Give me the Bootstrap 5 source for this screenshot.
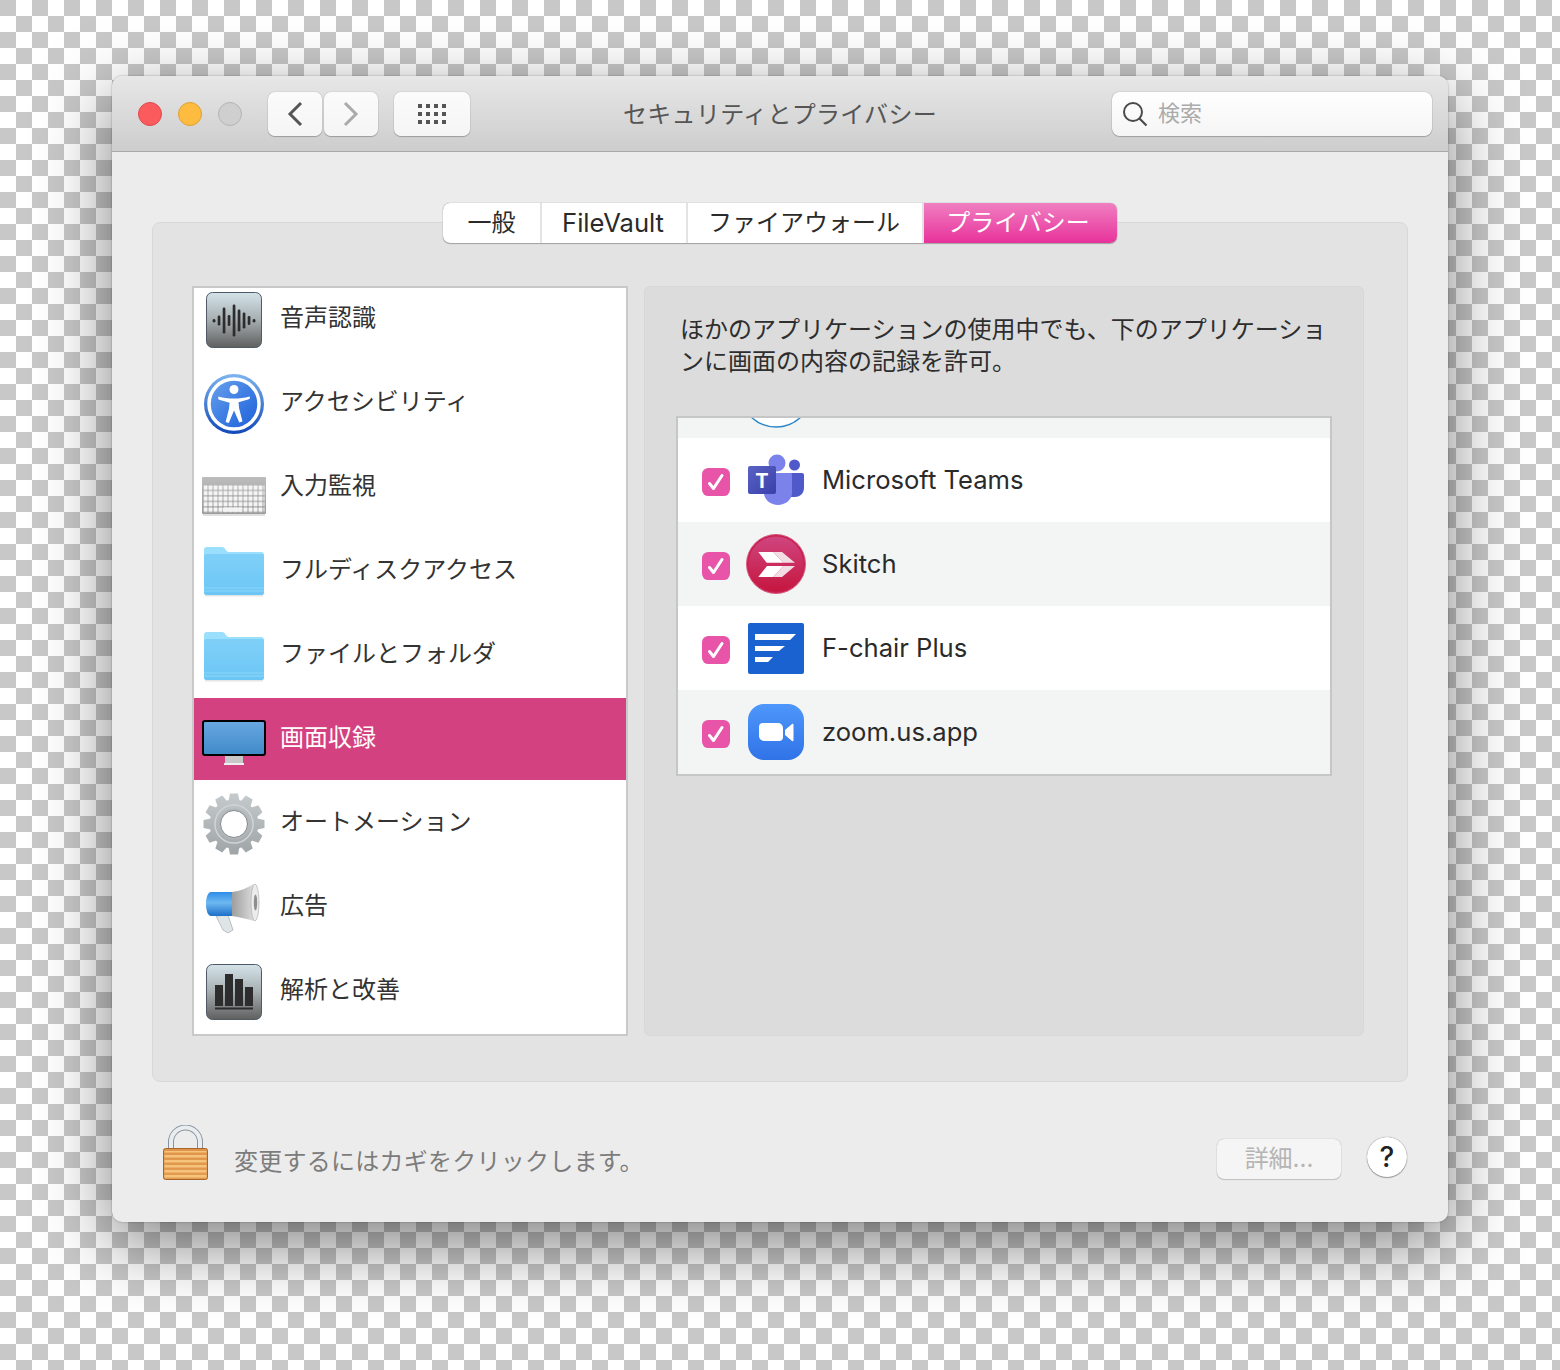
<!DOCTYPE html>
<html lang="ja">
<head>
  <meta charset="UTF-8">
  <title>セキュリティとプライバシー</title>
  <link href="https://cdn.jsdelivr.net/npm/bootstrap@5.3.2/dist/css/bootstrap.min.css" rel="stylesheet">
  <style>
    html, body { height: 100%; }
    body {
      margin: 0;
      overflow: hidden;
      font-family: Inter, "Noto Sans CJK JP", sans-serif;
      background-color: #fff;
      background-image: conic-gradient(#fff 25%, #c8c8c8 0 50%, #fff 0 75%, #c8c8c8 0);
      background-size: 32px 32px;
      padding: 76px 112px 0;
    }
    .mac-window {
      width: 1336px;
      height: 1146px;
      background: #ececec;
      border-radius: 10px;
      box-shadow: 0 0 2px rgba(0,0,0,.35), 0 22px 70px rgba(0,0,0,.5);
      overflow: hidden;
    }
    .titlebar {
      height: 76px;
      padding: 0 16px;
      background: linear-gradient(#e7e7e7, #cdcdcd);
      border-bottom: 1px solid #a9a9a9;
    }
    .side-slot { flex: 1 1 0; }
    .lights { margin: 0 26px 0 10px; gap: 16px; }
    .nav-group { gap: 2px; }
    .win-title { font-size: 24px; letter-spacing: .3px; color: #555; line-height: 32px; position: relative; top: 1px; }
    .light { width: 24px; height: 24px; border-radius: 50%; border: 1px solid; }
    .light-red { background: #fc5b5e; border-color: #e0484c; }
    .light-yellow { background: #fdbc40; border-color: #dea034; }
    .light-off { background: #cfcfcf; border-color: #b5b5b5; }
    .tool-btn {
      height: 44px;
      background: linear-gradient(#fbfbfb, #f5f5f5);
      border-radius: 7px;
      box-shadow: 0 0 1px rgba(0,0,0,.45), 0 1px 1px rgba(0,0,0,.22);
    }
    .tool-nav { width: 54px; }
    .tool-grid { width: 76px; margin-left: 14px; }
    .search-box {
      width: 320px;
      height: 44px;
      padding-left: 10px;
      background: linear-gradient(#fff, #f5f5f5);
      border-radius: 8px;
      box-shadow: 0 0 1px rgba(0,0,0,.55), 0 1px 1px rgba(0,0,0,.2);
      color: #ababab;
      font-size: 22px;
    }
    .search-box svg { margin-right: 10px; }
    .tab-strip {
      height: 40px;
      margin: 51px auto -21px;
      width: 674px;
      position: relative;
      background: #fff;
      border-radius: 7px;
      box-shadow: 0 0 1px rgba(0,0,0,.5), 0 1px 1px rgba(0,0,0,.25);
      font-size: 24px;
      color: #2a2a2a;
      overflow: hidden;
    }
    .tab-cell { height: 40px; border-right: 2px solid #e3e3e3; }
    .tab-general { width: 99px; }
    .tab-vault { width: 146px; font-size: 25.6px; padding-right: 2px; }
    .tab-firewall { width: 236px; padding-right: 2px; }
    .tab-on { width: 193px; padding-right: 5px; background: linear-gradient(#f07fc0, #e8329c); color: #fff; border: 0; }
    .group-panel {
      margin: 0 40px;
      height: 860px;
      padding: 63px 43px 45px 39px;
      background: #e3e3e3;
      border: 1px solid #d8d8d8;
      border-radius: 8px;
    }
    .pane-list {
      width: 436px;
      height: 750px;
      background: #fff;
      border: 2px solid #c9c9c9;
      overflow: hidden;
      border-radius: 0;
    }
    .pane-list .pane-row {
      height: 84px;
      margin-top: 0;
      padding: 0 0 0 8px;
      border: 0;
      border-radius: 0;
      font-size: 24px;
      color: #333;
      background: transparent;
    }
    .pane-list .pane-row.first-row { height: 72px; padding-bottom: 12px; }
    .pane-list .pane-row.active {
      height: 82px;
      margin-top: 2px;
      padding-bottom: 2px;
      background: #d44180;
      color: #fff;
    }
    .icon-slot { width: 64px; flex: none; margin-right: 14px; position: relative; top: 2px; }
    .icon-slot svg { display: block; margin: auto; }
    .icon-slot .shift-kb { margin-top: 18px; }
    .icon-slot .shift-folder { margin-top: 2px; }
    .icon-slot .shift-screen { margin-top: 6px; }
    .detail-pane {
      width: 720px;
      height: 750px;
      margin-left: 16px;
      background: #dcdcdc;
      border: 1px solid #d8d8d8;
      border-radius: 6px;
      padding: 27px 31px 0;
    }
    .detail-text { font-size: 24px; line-height: 32px; color: #2e2e2e; margin: 0 0 38px 4px; width: 650px; }
    .app-list {
      width: 656px;
      background: #fff;
      border: 2px solid #c6c6c6;
      border-radius: 0;
    }
    .app-list .app-row {
      height: 84px;
      margin-top: 0;
      padding: 0 0 0 24px;
      border: 0;
      border-radius: 0;
      font-size: 25.6px;
      color: #2a2a2a;
    }
    .app-list .app-row.tint, .cut-row { background: #f3f5f4; }
    .cut-row { height: 20px; overflow: hidden; padding-left: 70px; }
    .cut-row svg { display: block; }
    .app-check {
      width: 28px;
      height: 28px;
      margin: 4px 16px 0 0;
      border: 0;
      border-radius: 5px;
      flex: none;
    }
    .app-check:checked {
      background-color: #e855a8;
      background-size: 28px 28px;
      background-image: url("data:image/svg+xml,%3csvg xmlns='http://www.w3.org/2000/svg' viewBox='0 0 28 28'%3e%3cpath fill='none' stroke='%23fff' stroke-width='3' stroke-linecap='round' stroke-linejoin='round' d='M7.5 15.5l4 5L20 7.500'/%3e%3c/svg%3e");
    }
    .app-icon { width: 60px; flex: none; margin-right: 16px; }
    .app-icon svg { display: block; margin: auto; }
    .foot-bar { height: 138px; padding: 0 41px 0 51px; }
    .lock-icon { flex: none; margin-top: 2px; }
    .hint-text { font-size: 24px; letter-spacing: .25px; color: #7c7c7c; margin-left: 26px; position: relative; top: 11px; }
    .more-btn {
      width: 124px;
      height: 40px;
      background: #f5f5f5;
      border-radius: 7px;
      box-shadow: 0 0 1px rgba(0,0,0,.35), 0 1px 1px rgba(0,0,0,.16);
      color: #b4b4b4;
      font-size: 24px;
      position: relative;
      top: 8px;
    }
    .help-btn {
      width: 40px;
      height: 40px;
      margin-left: 26px;
      border-radius: 50%;
      background: #fff;
      box-shadow: 0 0 1px rgba(0,0,0,.6), 0 1px 1px rgba(0,0,0,.3);
      font-size: 28px;
      font-weight: 500;
      color: #222;
      position: relative;
      top: 6px;
    }
  </style>
</head>
<body>
<div class="mac-window">
  <div class="titlebar d-flex align-items-center">
    <div class="side-slot d-flex align-items-center">
      <div class="lights d-flex">
        <span class="light light-red"></span>
        <span class="light light-yellow"></span>
        <span class="light light-off"></span>
      </div>
      <div class="nav-group d-flex">
        <div class="tool-btn tool-nav d-flex align-items-center justify-content-center">
          <svg width="16" height="26" viewBox="0 0 16 26"><path d="M14 2 3 13l11 11" fill="none" stroke="#555" stroke-width="3"/></svg>
        </div>
        <div class="tool-btn tool-nav d-flex align-items-center justify-content-center">
          <svg width="16" height="26" viewBox="0 0 16 26"><path d="M2 2l11 11L2 24" fill="none" stroke="#aaa" stroke-width="3"/></svg>
        </div>
        <div class="tool-btn tool-grid d-flex align-items-center justify-content-center">
          <svg width="28" height="20" viewBox="0 0 28 20" fill="#555">
            <rect x="0" y="0" width="4" height="4"/><rect x="8" y="0" width="4" height="4"/><rect x="16" y="0" width="4" height="4"/><rect x="24" y="0" width="4" height="4"/>
            <rect x="0" y="8" width="4" height="4"/><rect x="8" y="8" width="4" height="4"/><rect x="16" y="8" width="4" height="4"/><rect x="24" y="8" width="4" height="4"/>
            <rect x="0" y="16" width="4" height="4"/><rect x="8" y="16" width="4" height="4"/><rect x="16" y="16" width="4" height="4"/><rect x="24" y="16" width="4" height="4"/>
          </svg>
        </div>
      </div>
    </div>
    <div class="win-title">セキュリティとプライバシー</div>
    <div class="side-slot d-flex justify-content-end">
      <div class="search-box d-flex align-items-center">
        <svg width="26" height="26" viewBox="0 0 26 26"><circle cx="11" cy="11" r="9" fill="none" stroke="#4a4a4a" stroke-width="2"/><path d="M17.5 17.5l7 7" stroke="#4a4a4a" stroke-width="2.2"/></svg>
        <span>検索</span>
      </div>
    </div>
  </div>

  <div class="tab-strip d-flex text-center">
    <div class="tab-cell tab-general d-flex align-items-center justify-content-center">一般</div>
    <div class="tab-cell tab-vault d-flex align-items-center justify-content-center">FileVault</div>
    <div class="tab-cell tab-firewall d-flex align-items-center justify-content-center">ファイアウォール</div>
    <div class="tab-cell tab-on d-flex align-items-center justify-content-center">プライバシー</div>
  </div>

  <div class="group-panel d-flex">
    <div class="pane-list list-group flex-shrink-0">
      <div class="pane-row first-row list-group-item d-flex align-items-center">
        <span class="icon-slot">
          <svg width="56" height="56" viewBox="0 0 56 56">
            <defs><linearGradient id="tileA" x1="0" y1="0" x2="0" y2="1"><stop offset="0" stop-color="#d4e3e9"/><stop offset=".5" stop-color="#a6aeb0"/><stop offset="1" stop-color="#5f5f5f"/></linearGradient></defs>
            <rect x=".5" y=".5" width="55" height="55" rx="6" fill="url(#tileA)" stroke="#4f5a66"/>
            <g fill="#2d2d2d">
              <rect x="6.700" y="27" width="2.700" height="3.500" rx="1.300"/><rect x="11.700" y="23.500" width="2.700" height="10" rx="1.300"/><rect x="16.700" y="15.500" width="2.700" height="26" rx="1.300"/><rect x="21.700" y="23" width="2.700" height="11" rx="1.300"/><rect x="26.700" y="12.500" width="2.700" height="32" rx="1.300"/><rect x="31.700" y="17.500" width="2.700" height="22" rx="1.300"/><rect x="36.700" y="20.500" width="2.700" height="16" rx="1.300"/><rect x="41.700" y="24" width="2.700" height="9" rx="1.300"/><rect x="46.700" y="27" width="2.700" height="3.500" rx="1.300"/>
            </g>
          </svg>
        </span>
        音声認識
      </div>
      <div class="pane-row list-group-item d-flex align-items-center">
        <span class="icon-slot">
          <svg width="60" height="60" viewBox="0 0 60 60">
            <defs>
              <linearGradient id="blueBall" x1="0" y1="0" x2="1" y2="1"><stop offset="0" stop-color="#6ea4ec"/><stop offset=".5" stop-color="#3f7fe4"/><stop offset="1" stop-color="#1f5fd8"/></linearGradient>
              <linearGradient id="blueRim" x1="0" y1="0" x2="0" y2="1"><stop offset="0" stop-color="#7db4ef"/><stop offset="1" stop-color="#1249ba"/></linearGradient>
            </defs>
            <circle cx="30" cy="30" r="30" fill="url(#blueRim)"/>
            <circle cx="30" cy="30" r="25" fill="url(#blueBall)" stroke="#fff" stroke-width="3.500"/>
            <circle cx="30" cy="15.500" r="4.500" fill="#fff"/>
            <path d="M14.500 22.500c5 1.500 10 2 15.500 2s10.500-.5 15.500-2c.9 1.300.4 2.300-.6 2.700l-10.400 3 .6 6 3.400 13.300-3.200 1L30 36.500l-5.200 12.500-3.200-1 3.400-13.300.6-6-10.400-3c-1-.4-1.500-1.400-.7-2.700z" fill="#fff"/>
          </svg>
        </span>
        アクセシビリティ
      </div>
      <div class="pane-row list-group-item d-flex align-items-center">
        <span class="icon-slot">
          <svg class="shift-kb" width="64" height="40" viewBox="0 0 64 40">
            <defs>
              <linearGradient id="kbBody" x1="0" y1="0" x2="0" y2="1"><stop offset="0" stop-color="#bcbcbc"/><stop offset="1" stop-color="#9c9c9c"/></linearGradient>
              <pattern id="kbKeys" width="5" height="5.500" patternUnits="userSpaceOnUse" x="1" y="8"><rect x=".5" y=".5" width="4" height="4.300" rx=".6" fill="#f4f4f4"/></pattern>
            </defs>
            <rect x="0" y="0" width="64" height="37" rx="1" fill="url(#kbBody)"/>
            <rect x="1.500" y="8" width="61" height="27.500" fill="url(#kbKeys)"/>
            <rect x="21" y="30.500" width="19" height="4.300" rx=".6" fill="#f4f4f4"/>
            <rect x="1" y="37" width="62" height="2" fill="#000" opacity=".12"/>
          </svg>
        </span>
        入力監視
      </div>
      <div class="pane-row list-group-item d-flex align-items-center">
        <span class="icon-slot">
          <svg width="60" height="50" viewBox="0 0 60 50">
            <defs><linearGradient id="folderA" x1="0" y1="0" x2="0" y2="1"><stop offset="0" stop-color="#7fd0f8"/><stop offset="1" stop-color="#6cc6f5"/></linearGradient></defs>
            <path d="M0 3a3 3 0 0 1 3-3h15c2 0 2.500 1 3.500 2.500S23 5 25 5h32a3 3 0 0 1 3 3v10H0z" fill="#9adffb"/>
            <path d="M0 9a2 2 0 0 1 2-2h56a2 2 0 0 1 2 2v37a2 2 0 0 1-2 2H2a2 2 0 0 1-2-2z" fill="url(#folderA)"/>
            <path d="M0 41h60M0 44h60" stroke="#8bd6f9" stroke-width="1"/>
            <rect x="1" y="48" width="58" height="1.500" fill="#000" opacity=".1"/>
          </svg>
        </span>
        フルディスクアクセス
      </div>
      <div class="pane-row list-group-item d-flex align-items-center">
        <span class="icon-slot">
          <svg class="shift-folder" width="60" height="50" viewBox="0 0 60 50">
            <path d="M0 3a3 3 0 0 1 3-3h15c2 0 2.500 1 3.500 2.500S23 5 25 5h32a3 3 0 0 1 3 3v10H0z" fill="#9adffb"/>
            <path d="M0 9a2 2 0 0 1 2-2h56a2 2 0 0 1 2 2v37a2 2 0 0 1-2 2H2a2 2 0 0 1-2-2z" fill="url(#folderA)"/>
            <path d="M0 41h60M0 44h60" stroke="#8bd6f9" stroke-width="1"/>
            <rect x="1" y="48" width="58" height="1.500" fill="#000" opacity=".1"/>
          </svg>
        </span>
        ファイルとフォルダ
      </div>
      <div class="pane-row list-group-item active d-flex align-items-center">
        <span class="icon-slot">
          <svg class="shift-screen" width="64" height="46" viewBox="0 0 64 46">
            <defs><linearGradient id="screenA" x1="0" y1="0" x2="0" y2="1"><stop offset="0" stop-color="#69a8e2"/><stop offset="1" stop-color="#3f8ac8"/></linearGradient></defs>
            <rect x="1" y="1" width="62" height="34" rx="2" fill="url(#screenA)" stroke="#000" stroke-width="2"/>
            <rect x="23" y="36" width="18" height="7" fill="#c8c8c8"/>
            <rect x="22" y="43" width="20" height="2" fill="#eee"/>
          </svg>
        </span>
        画面収録
      </div>
      <div class="pane-row list-group-item d-flex align-items-center">
        <span class="icon-slot">
          <svg width="64" height="64" viewBox="0 0 64 64">
            <defs>
              <linearGradient id="gearA" x1="0" y1="0" x2="0" y2="1"><stop offset="0" stop-color="#c6cbce"/><stop offset="1" stop-color="#9ea3a6"/></linearGradient>
              <path id="gearTooth" d="M28 1.500h8l2 10H26z"/>
              <mask id="gearShape">
                <g fill="#fff">
                  <circle cx="32" cy="32" r="24.500"/>
                  <use href="#gearTooth"/>
                  <use href="#gearTooth" transform="rotate(30 32 32)"/>
                  <use href="#gearTooth" transform="rotate(60 32 32)"/>
                  <use href="#gearTooth" transform="rotate(90 32 32)"/>
                  <use href="#gearTooth" transform="rotate(120 32 32)"/>
                  <use href="#gearTooth" transform="rotate(150 32 32)"/>
                  <use href="#gearTooth" transform="rotate(180 32 32)"/>
                  <use href="#gearTooth" transform="rotate(210 32 32)"/>
                  <use href="#gearTooth" transform="rotate(240 32 32)"/>
                  <use href="#gearTooth" transform="rotate(270 32 32)"/>
                  <use href="#gearTooth" transform="rotate(300 32 32)"/>
                  <use href="#gearTooth" transform="rotate(330 32 32)"/>
                </g>
              </mask>
            </defs>
            <rect width="64" height="64" fill="url(#gearA)" mask="url(#gearShape)"/>
            <circle cx="32" cy="32" r="19" fill="none" stroke="#d0d4d6" stroke-width="1.500"/>
            <circle cx="32" cy="32" r="15.500" fill="#b2b7ba"/>
            <circle cx="32" cy="32" r="13.500" fill="#fff" stroke="#84898c" stroke-width="1"/>
          </svg>
        </span>
        オートメーション
      </div>
      <div class="pane-row list-group-item d-flex align-items-center">
        <span class="icon-slot">
          <svg class="shift-folder" width="56" height="50" viewBox="0 0 56 50">
            <defs>
              <linearGradient id="megaBlue" x1="0" y1="0" x2="0" y2="1"><stop offset="0" stop-color="#2d8de8"/><stop offset=".45" stop-color="#6db8f0"/><stop offset="1" stop-color="#1d6fc9"/></linearGradient>
              <linearGradient id="megaCone" x1="0" y1="0" x2="1" y2="0"><stop offset="0" stop-color="#9e9e9e"/><stop offset="1" stop-color="#dcdcdc"/></linearGradient>
            </defs>
            <path d="M10 32l12-1 5 15-5 3-5-3z" fill="#dfe4e6" stroke="#a5abae" stroke-width=".7"/>
            <path d="M5 8h21v24H5C2 32 0 27 0 20S2 8 5 8z" fill="url(#megaBlue)"/>
            <path d="M26 8c8-1 15-4 22-8v37c-7-2-14-4-22-5z" fill="url(#megaCone)"/>
            <ellipse cx="49" cy="18.500" rx="4" ry="18.500" fill="#ececec" stroke="#b2b2b2" stroke-width=".7"/>
            <ellipse cx="49.500" cy="18.500" rx="1.700" ry="8" fill="#8e8e8e"/>
          </svg>
        </span>
        広告
      </div>
      <div class="pane-row list-group-item d-flex align-items-center">
        <span class="icon-slot">
          <svg width="56" height="56" viewBox="0 0 56 56">
            <rect x=".5" y=".5" width="55" height="55" rx="6" fill="url(#tileA)" stroke="#4f5a66"/>
            <g fill="#2d2d2d">
              <rect x="9" y="21" width="8" height="21"/><rect x="19" y="10" width="8" height="32"/><rect x="29" y="15" width="8" height="27"/><rect x="39" y="23" width="8" height="19"/>
              <rect x="9" y="43.500" width="38" height="2"/>
            </g>
          </svg>
        </span>
        解析と改善
      </div>
    </div>

    <div class="detail-pane">
      <p class="detail-text">ほかのアプリケーションの使用中でも、下のアプリケーションに画面の内容の記録を許可。</p>
      <div class="app-list list-group">
        <div class="cut-row">
          <svg width="60" height="20" viewBox="0 0 60 20"><circle cx="28" cy="-27" r="36" fill="#fff" stroke="#2e86c8" stroke-width="1.500"/></svg>
        </div>
        <div class="app-row list-group-item d-flex align-items-center">
          <input class="form-check-input app-check" type="checkbox" checked>
          <span class="app-icon">
            <svg width="56" height="52" viewBox="0 0 56 52">
              <defs><linearGradient id="teamsT" x1="0" y1="0" x2="1" y2="1"><stop offset="0" stop-color="#5a62c3"/><stop offset="1" stop-color="#3940ab"/></linearGradient></defs>
              <circle cx="46.500" cy="11" r="5.500" fill="#5059c9"/>
              <path d="M38 19h16a2 2 0 0 1 2 2v13c0 6-5 9-9 9H38z" fill="#5059c9"/>
              <circle cx="29" cy="9" r="8.500" fill="#7b83eb"/>
              <path d="M16 19h27a2 2 0 0 1 1 2v18c0 7-7 12-14 12s-14-5-14-12z" fill="#7b83eb"/>
              <rect x="0" y="12" width="28" height="28" rx="2" fill="url(#teamsT)"/>
              <text x="14" y="34" text-anchor="middle" fill="#fff" font-family="Inter, sans-serif" font-weight="700" font-size="20">T</text>
            </svg>
          </span>
          Microsoft Teams
        </div>
        <div class="app-row tint list-group-item d-flex align-items-center">
          <input class="form-check-input app-check" type="checkbox" checked>
          <span class="app-icon">
            <svg width="60" height="60" viewBox="0 0 60 60">
              <defs><linearGradient id="skitchA" x1="0" y1="0" x2="0" y2="1"><stop offset="0" stop-color="#d0457f"/><stop offset="1" stop-color="#c5163f"/></linearGradient></defs>
              <circle cx="30" cy="30" r="29.500" fill="#c8204f" stroke="#d65f86" stroke-width="1"/>
              <circle cx="30" cy="30" r="27.500" fill="url(#skitchA)"/>
              <path d="M12.300 18h15l10 10.700H20.700zM21 32h16.300L27.300 43h-15z" fill="#fff"/>
              <path d="M27.300 18H36l13 10.700H37.300zM37.300 32H49L36 43h-8.700z" fill="#f3dde5"/>
            </svg>
          </span>
          Skitch
        </div>
        <div class="app-row list-group-item d-flex align-items-center">
          <input class="form-check-input app-check" type="checkbox" checked>
          <span class="app-icon">
            <svg width="56" height="51" viewBox="0 0 56 51">
              <rect width="56" height="51" rx="2" fill="#1a62cf"/>
              <path d="M7 11h41l-6 6H7zM7 23h30l-6 5H7zM7 34h18l-5 5H7z" fill="#fff"/>
            </svg>
          </span>
          F-chair Plus
        </div>
        <div class="app-row tint list-group-item d-flex align-items-center">
          <input class="form-check-input app-check" type="checkbox" checked>
          <span class="app-icon">
            <svg width="56" height="56" viewBox="0 0 56 56">
              <defs><linearGradient id="zoomA" x1="0" y1="0" x2="0" y2="1"><stop offset="0" stop-color="#4e97fb"/><stop offset="1" stop-color="#3073e8"/></linearGradient></defs>
              <rect width="56" height="56" rx="16" fill="url(#zoomA)"/>
              <path d="M11 23a4 4 0 0 1 4-4h15a5 5 0 0 1 5 5v9a4 4 0 0 1-4 4H16a5 5 0 0 1-5-5zM37 26l7-6c.7-.5 1.500-.2 1.500.8v15.400c0 1-.8 1.300-1.500.8l-7-6z" fill="#fff"/>
            </svg>
          </span>
          zoom.us.app
        </div>
      </div>
    </div>
  </div>

  <div class="foot-bar d-flex align-items-center">
    <svg class="lock-icon" width="45" height="55" viewBox="0 0 45 55">
      <defs>
        <linearGradient id="lockBody" x1="0" y1="0" x2="0" y2="1"><stop offset="0" stop-color="#df9449"/><stop offset="1" stop-color="#e39c50"/></linearGradient>
        <pattern id="lockStripe" width="10" height="5" patternUnits="userSpaceOnUse"><rect width="10" height="2.500" fill="#f5c37c"/></pattern>
      </defs>
      <path d="M8 24V17a14.500 14.500 0 0 1 29 0v7" fill="none" stroke="#8593a0" stroke-width="6"/>
      <path d="M8 24V17a14.500 14.500 0 0 1 29 0v7" fill="none" stroke="#e9edef" stroke-width="4"/>
      <rect x=".5" y="23.500" width="44" height="31" rx="2" fill="url(#lockBody)" stroke="#a5652c"/>
      <rect x="1.500" y="26" width="42" height="27" fill="url(#lockStripe)"/>
    </svg>
    <span class="hint-text me-auto">変更するにはカギをクリックします。</span>
    <div class="more-btn d-flex align-items-center justify-content-center">詳細...</div>
    <div class="help-btn d-flex align-items-center justify-content-center">?</div>
  </div>
</div>
<script src="https://cdn.jsdelivr.net/npm/bootstrap@5.3.2/dist/js/bootstrap.bundle.min.js"></script>
</body>
</html>
